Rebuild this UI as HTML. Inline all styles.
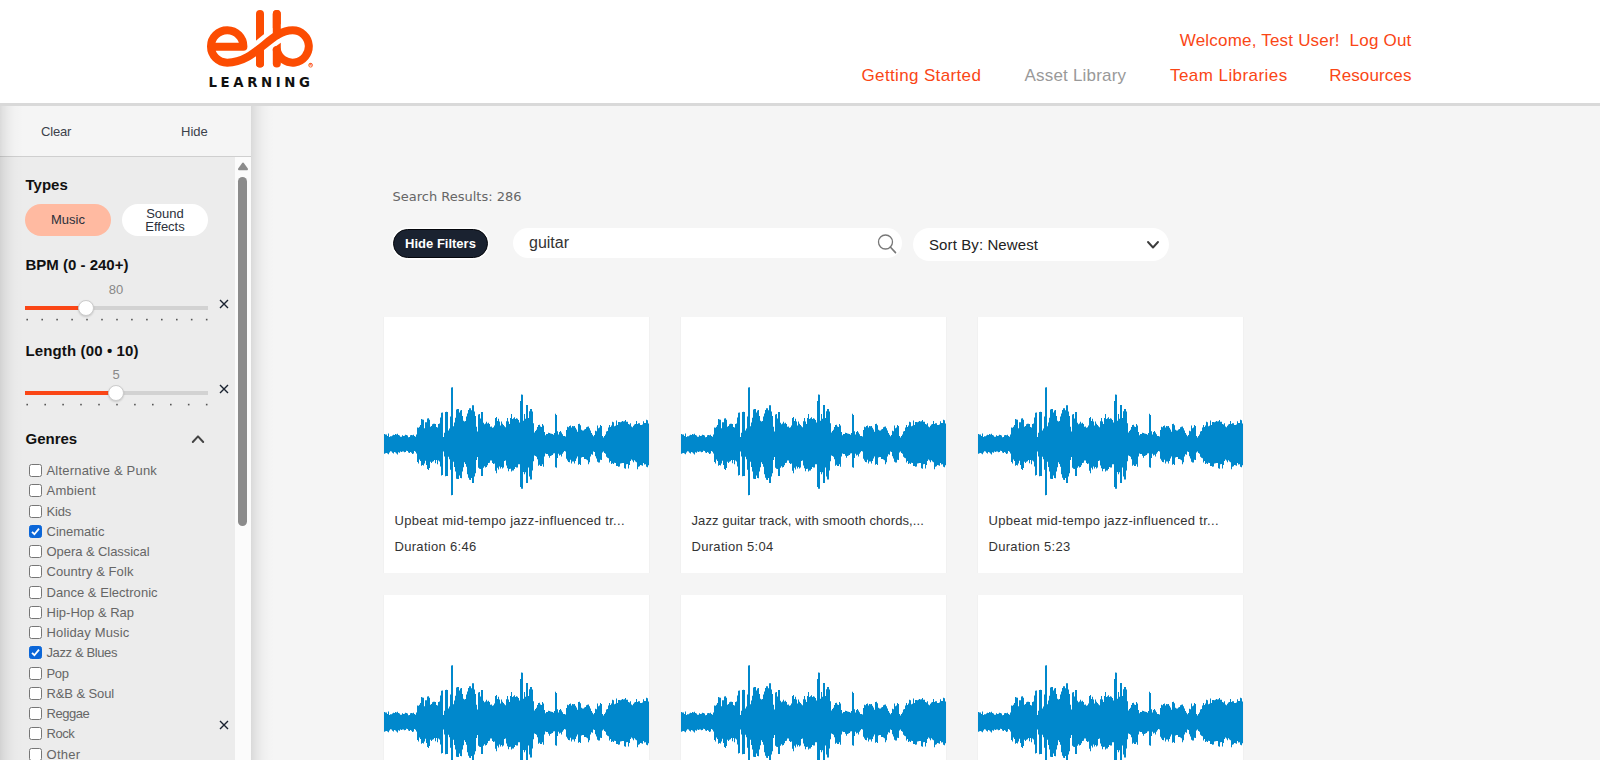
<!DOCTYPE html><html lang="en"><head><meta charset="utf-8"><title>Asset Library</title><style>
*{box-sizing:border-box;margin:0;padding:0}
html,body{width:1600px;height:760px;overflow:hidden;background:#f5f5f5;font-family:"Liberation Sans","DejaVu Sans",sans-serif;color:#333}
.abs{position:absolute;white-space:nowrap}
header{position:absolute;left:0;top:0;width:1600px;height:106px;background:#fff;border-bottom:3px solid #d9d9d9}
.nav a{position:absolute;white-space:nowrap;font-size:17px;line-height:20px;color:#fa4616;text-decoration:none}
.nav a.cur{color:#999}
#side{position:absolute;left:0;top:106px;width:251px;height:654px;background:#f5f5f5;}
.shl,.shr{position:absolute;top:106px;width:22px;height:654px;pointer-events:none}
.shl{left:0;width:26px;background:linear-gradient(90deg,rgba(0,0,0,.11) 0,rgba(0,0,0,.08) 3px,rgba(0,0,0,.05) 7px,rgba(0,0,0,.028) 11px,rgba(0,0,0,.013) 15px,rgba(0,0,0,.005) 20px,rgba(0,0,0,0) 25px)}
.shr{left:251px;width:26px;background:linear-gradient(90deg,rgba(0,0,0,.115) 0,rgba(0,0,0,.085) 3px,rgba(0,0,0,.055) 7px,rgba(0,0,0,.03) 11px,rgba(0,0,0,.014) 15px,rgba(0,0,0,.005) 20px,rgba(0,0,0,0) 25px)}
#side .top{position:absolute;left:0;top:0;width:251px;height:51px;border-bottom:1px solid #cfcfcf;background:#f5f5f5}
#side .top span{position:absolute;font-size:13px;line-height:16px;color:#3c414b}
#scroll{position:absolute;left:0;top:51px;width:235px;height:603px;background:#ececec;overflow:hidden}
#sbar{position:absolute;left:235px;top:51px;width:16px;height:603px;background:#fbfbfb}
#sbar i{position:absolute;left:3.2px;top:19.5px;width:9px;height:349px;border-radius:5px;background:#8b8b8b}
h3{position:absolute;left:25.5px;font-size:15px;line-height:18px;font-weight:bold;color:#111;white-space:nowrap}
.pill{position:absolute;top:47px;width:86px;height:32px;border-radius:16px;font-size:13px;color:#2b303b;text-align:center}
.val{position:absolute;left:96px;width:40px;text-align:center;font-size:13px;line-height:16px;color:#888}
.track{position:absolute;left:25px;width:183px;height:4px;background:#d2d2d2}
.track u{position:absolute;left:0;top:0;height:4px;background:#fa4616;display:block}
.thumb{position:absolute;width:16px;height:16px;border-radius:50%;background:#fff;border:1px solid #ccc;box-shadow:0 1px 2px rgba(0,0,0,.15)}
.dots{position:absolute;left:0;top:0}
.x{position:absolute;left:219px;width:10px;height:10px}
.g{position:absolute;left:29px;height:20px;font-size:13px;line-height:20px;color:#666;white-space:nowrap}
.g i{position:absolute;left:0;top:3px;width:13px;height:13px;border:1px solid #767676;border-radius:2.5px;background:#fff}
.g i.on{background:#0b66d8;border-color:#0b66d8}
.g span{position:absolute;left:17.5px;top:0;letter-spacing:.15px}
#main{position:absolute;left:0;top:0}
.card{position:absolute;width:265px;height:256px;background:#fff;box-shadow:-1px 0 0 #f1f1f1,1px 0 0 #f1f1f1;overflow:hidden}
.card svg{position:absolute;left:0;top:47px}
.card p{position:absolute;left:10.5px;letter-spacing:.3px;font-size:13px;line-height:16px;color:#333;white-space:nowrap}
</style></head><body>
<div id="main">
<div class="abs" id="sr" style="left:392.5px;top:188.5px;font-family:'DejaVu Sans',sans-serif;font-size:13px;line-height:16px;color:#666">Search Results: 286</div>
<div class="abs" id="hf" style="left:393px;top:229px;width:95px;height:29px;border-radius:15px;background:#1a2230;border:1px solid #05070c;box-shadow:0 0 0 1.5px rgba(255,255,255,.85);color:#fff;font-weight:bold;font-size:13px;line-height:27px;text-align:center">Hide Filters</div>
<div class="abs" style="left:513px;top:228.3px;width:389px;height:30px;border-radius:15px;background:#fff"></div>
<div class="abs" id="gt" style="left:529px;top:234.3px;font-size:16px;line-height:18px;color:#333">guitar</div>
<svg class="abs" style="left:875px;top:232px" width="24" height="24" viewBox="0 0 24 24"><circle cx="10.5" cy="10" r="7" fill="none" stroke="#777" stroke-width="1.3"/><path d="M15.3 15 L20.5 20.6" stroke="#777" stroke-width="1.6" stroke-linecap="round"/></svg>
<div class="abs" style="left:913px;top:228px;width:256px;height:33px;border-radius:17px;background:#fff"></div>
<div class="abs" id="sb" style="left:929px;top:236px;letter-spacing:.1px;font-size:15px;line-height:18px;color:#222">Sort By: Newest</div>
<svg class="abs" style="left:1146px;top:239px" width="14" height="12" viewBox="0 0 14 12"><path d="M2 3 L7 8.5 L12 3" fill="none" stroke="#3c3c3c" stroke-width="1.9" stroke-linecap="round" stroke-linejoin="round"/></svg>
<div class="card" style="left:384px;top:317px"><svg width="265" height="160" viewBox="0 -80 265 160"><path fill="#0088cc" d="M0,0V-9.9H1V-9.4H2V-9.6H3V-8.1H4V-10.4H5V-6.9H6V-7.8H7V-7.8H8V-8.5H9V-9.2H10V-9H11V-10H12V-9.6H13V-10.2H14V-8.9H15V-8.4H16V-7.3H17V-7.3H18V-8.8H19V-7.9H20V-8.2H21V-9.2H22V-9.1H23V-8.5H24V-6.8H25V-7.1H26V-8.7H27V-9.1H28V-8.7H29V-9.2H30V-8.1H31V-7.3H32V-9.6H33V-16.4H34V-16.2H35V-17.3H36V-18.9H37V-25.1H38V-24.4H39V-24.3H40V-15.8H41V-21.8H42V-21.7H43V-25.6H44V-25.7H45V-24.3H46V-17.2H47V-17.9H48V-19.8H49V-20.2H50V-20.3H51V-20.1H52V-16.9H53V-16.5H54V-20.1H55V-20.5H56V-26.5H57V-31.2H58V-31.4H59V-7.1H60V-11.2H61V-31.9H62V-32.2H63V-32.1H64V-13.4H65V-15.6H66V-27.5H67V-56.6H68V-56.8H69V-17.8H70V-21.4H71V-26.2H72V-34.5H73V-35H74V-34.9H75V-31.4H76V-33.6H77V-33.9H78V-28.1H79V-23.3H80V-22.4H81V-23H82V-27.4H83V-30.6H84V-34.1H85V-35.8H86V-35.8H87V-33.8H88V-38.8H89V-38.8H90V-32.4H91V-27.9H92V-17.2H93V-12.6H94V-29.5H95V-29.9H96V-25.6H97V-32.1H98V-31.9H99V-21.2H100V-19.7H101V-20.6H102V-22.2H103V-20.6H104V-21.3H105V-19.9H106V-17.3H107V-17.4H108V-16.3H109V-16.7H110V-18.6H111V-26.1H112V-27H113V-22.9H114V-25.2H115V-22.5H116V-18.4H117V-22.4H118V-20.3H119V-19.1H120V-17.8H121V-16.8H122V-22.7H123V-26.1H124V-22.4H125V-20.1H126V-26H127V-29.9H128V-25.1H129V-25.8H130V-26.8H131V-25H132V-25.8H133V-25.2H134V-24H135V-21.5H136V-43H137V-49.6H138V-49.3H139V-23.2H140V-30.1H141V-25.3H142V-39H143V-39H144V-26.1H145V-32.8H146V-35.1H147V-35H148V-32.4H149V-20.8H150V-11.5H151V-13H152V-14.2H153V-16.9H154V-19.1H155V-19.3H156V-17.5H157V-16.9H158V-20H159V-18.4H160V-12.1H161V-8.8H162V-10H163V-9.9H164V-11.2H165V-10.9H166V-10.4H167V-10.3H168V-10.1H169V-9.3H170V-11.1H171V-30.3H172V-28.9H173V-12.7H174V-9.4H175V-11.9H176V-12.9H177V-11.4H178V-9.7H179V-7.9H180V-7.9H181V-7.5H182V-14.1H183V-17.2H184V-16.8H185V-18H186V-18.6H187V-16.4H188V-18.1H189V-17.7H190V-17.9H191V-16.2H192V-14.5H193V-12.3H194V-20H195V-20.2H196V-18.7H197V-14.2H198V-13.5H199V-13.6H200V-14.4H201V-14.9H202V-16.7H203V-17.3H204V-17.4H205V-15.7H206V-13.4H207V-10.9H208V-9.2H209V-7.8H210V-9.1H211V-13.2H212V-12.7H213V-18.6H214V-15.7H215V-16.5H216V-19H217V-17.9H218V-8.1H219V-6.6H220V-7.9H221V-9.6H222V-12.6H223V-13H224V-16.6H225V-19H226V-16.9H227V-18.4H228V-22.2H229V-21.8H230V-17.8H231V-18.3H232V-23.4H233V-19H234V-22.1H235V-22H236V-21.8H237V-22.2H238V-22.9H239V-22.6H240V-22.7H241V-24H242V-22.3H243V-22.2H244V-19.9H245V-19.4H246V-20.7H247V-17.4H248V-16.7H249V-18.3H250V-19.6H251V-20H252V-22.9H253V-20.1H254V-20.7H255V-20.7H256V-19.1H257V-19H258V-19.5H259V-22.8H260V-20.9H261V-21H262V-24.3H263V-23.8H264V-20.6H265V0V21.2H264V23.2H263V22.8H262V20.3H261V20.6H260V18.9H259V21.8H258V21.2H257V21.1H256V22.2H255V22.7H254V25.2H253V18.2H252V17.5H251V16.2H250V18.2H249V16.4H248V15.6H247V17.1H246V21.1H245V24.4H244V19.9H243V20.2H242V24.7H241V24.3H240V18.9H239V18.9H238V19.3H237V19.5H236V22.5H235V22.8H234V21.9H233V22H232V18.9H231V18.8H230V19.9H229V19.2H228V20H227V17.1H226V18.5H225V14.2H224V13.7H223V12.7H222V9.7H221V8.9H220V7.4H219V8.6H218V15.9H217V15.7H216V18.4H215V18.5H214V17.8H213V14.6H212V12.3H211V8H210V7.4H209V10.8H208V10.3H207V12.5H206V18.2H205V20.3H204V16.3H203V15.5H202V15.1H201V15.1H200V13.1H199V13.1H198V13.5H197V21H196V20H195V20.7H194V12.6H193V14.4H192V17.1H191V19.5H190V17.6H189V17.5H188V19.6H187V15.8H186V18.3H185V18H184V16.5H183V14.7H182V7.4H181V7H180V8.3H179V9.7H178V12.5H177V10.7H176V11.5H175V9.7H174V13.9H173V23.7H172V23.3H171V9.2H170V9.6H169V11H168V11.4H167V11.9H166V13.7H165V11.8H164V10.1H163V9.9H162V9.4H161V12.4H160V22.7H159V20.3H158V22.1H157V22H156V20.8H155V21.8H154V15.2H153V12.7H152V12.1H151V11.4H150V17.3H149V26.6H148V35.5H147V35.5H146V32.6H145V23.4H144V38.9H143V38.9H142V28.3H141V30.2H140V27.9H139V44.7H138V44.7H137V42.9H136V20.3H135V20.2H134V23.4H133V23.4H132V23H131V25.1H130V26.4H129V26.6H128V27.6H127V24.7H126V25.1H125V27.3H124V24.2H123V21.5H122V16.6H121V17H120V23.4H119V24.5H118V23H117V24.6H116V22.4H115V25.6H114V23.8H113V29.3H112V26.7H111V19.6H110V19.9H109V18.9H108V16.5H107V16.4H106V18.7H105V19.1H104V21.2H103V23.1H102V23.4H101V22.3H100V23.8H99V32H98V32.1H97V24.9H96V24.7H95V23.8H94V13H93V16.1H92V29.3H91V32.5H90V39.1H89V39.1H88V34H87V36H86V35.7H85V33.8H84V30.3H83V22.8H82V19.9H81V18.3H80V23.2H79V27.4H78V34.2H77V33.9H76V31.4H75V35H74V35.1H73V34.7H72V27.4H71V23.1H70V17.7H69V51.1H68V51.2H67V25.8H66V15.3H65V12.8H64V31.9H63V32H62V32.3H61V12.4H60V7.4H59V31.1H58V31.4H57V22.6H56V17.5H55V16.4H54V20.3H53V15.9H52V19.3H51V16H50V17.3H49V17.7H48V18.9H47V17.7H46V24.1H45V25.9H44V24.9H43V20.9H42V16.7H41V19.6H40V21.5H39V21.1H38V21.8H37V17H36V15.4H35V19.4H34V17.9H33V9.4H32V7.8H31V7H30V9.5H29V10.1H28V8.8H27V8.1H26V8.9H25V8.4H24V7.1H23V6.8H22V8H21V8.2H20V7.6H19V7.4H18V8.1H17V7.6H16V8.8H15V8.2H14V10.5H13V9.5H12V8.4H11V8H10V9.5H9V8.7H8V7.4H7V7.2H6V8.4H5V10.3H4V9.4H3V9.1H2V9.2H1V9.7H0Z"/></svg><p class="ct" style="top:196px;letter-spacing:.3px">Upbeat mid-tempo jazz-influenced tr...</p><p class="cd" style="top:222px">Duration 6:46</p></div>
<div class="card" style="left:681px;top:317px"><svg width="265" height="160" viewBox="0 -80 265 160"><path fill="#0088cc" d="M0,0V-9.9H1V-9.4H2V-9.6H3V-8.1H4V-10.4H5V-6.9H6V-7.8H7V-7.8H8V-8.5H9V-9.2H10V-9H11V-10H12V-9.6H13V-10.2H14V-8.9H15V-8.4H16V-7.3H17V-7.3H18V-8.8H19V-7.9H20V-8.2H21V-9.2H22V-9.1H23V-8.5H24V-6.8H25V-7.1H26V-8.7H27V-9.1H28V-8.7H29V-9.2H30V-8.1H31V-7.3H32V-9.6H33V-16.4H34V-16.2H35V-17.3H36V-18.9H37V-25.1H38V-24.4H39V-24.3H40V-15.8H41V-21.8H42V-21.7H43V-25.6H44V-25.7H45V-24.3H46V-17.2H47V-17.9H48V-19.8H49V-20.2H50V-20.3H51V-20.1H52V-16.9H53V-16.5H54V-20.1H55V-20.5H56V-26.5H57V-31.2H58V-31.4H59V-7.1H60V-11.2H61V-31.9H62V-32.2H63V-32.1H64V-13.4H65V-15.6H66V-27.5H67V-56.6H68V-56.8H69V-17.8H70V-21.4H71V-26.2H72V-34.5H73V-35H74V-34.9H75V-31.4H76V-33.6H77V-33.9H78V-28.1H79V-23.3H80V-22.4H81V-23H82V-27.4H83V-30.6H84V-34.1H85V-35.8H86V-35.8H87V-33.8H88V-38.8H89V-38.8H90V-32.4H91V-27.9H92V-17.2H93V-12.6H94V-29.5H95V-29.9H96V-25.6H97V-32.1H98V-31.9H99V-21.2H100V-19.7H101V-20.6H102V-22.2H103V-20.6H104V-21.3H105V-19.9H106V-17.3H107V-17.4H108V-16.3H109V-16.7H110V-18.6H111V-26.1H112V-27H113V-22.9H114V-25.2H115V-22.5H116V-18.4H117V-22.4H118V-20.3H119V-19.1H120V-17.8H121V-16.8H122V-22.7H123V-26.1H124V-22.4H125V-20.1H126V-26H127V-29.9H128V-25.1H129V-25.8H130V-26.8H131V-25H132V-25.8H133V-25.2H134V-24H135V-21.5H136V-43H137V-49.6H138V-49.3H139V-23.2H140V-30.1H141V-25.3H142V-39H143V-39H144V-26.1H145V-32.8H146V-35.1H147V-35H148V-32.4H149V-20.8H150V-11.5H151V-13H152V-14.2H153V-16.9H154V-19.1H155V-19.3H156V-17.5H157V-16.9H158V-20H159V-18.4H160V-12.1H161V-8.8H162V-10H163V-9.9H164V-11.2H165V-10.9H166V-10.4H167V-10.3H168V-10.1H169V-9.3H170V-11.1H171V-30.3H172V-28.9H173V-12.7H174V-9.4H175V-11.9H176V-12.9H177V-11.4H178V-9.7H179V-7.9H180V-7.9H181V-7.5H182V-14.1H183V-17.2H184V-16.8H185V-18H186V-18.6H187V-16.4H188V-18.1H189V-17.7H190V-17.9H191V-16.2H192V-14.5H193V-12.3H194V-20H195V-20.2H196V-18.7H197V-14.2H198V-13.5H199V-13.6H200V-14.4H201V-14.9H202V-16.7H203V-17.3H204V-17.4H205V-15.7H206V-13.4H207V-10.9H208V-9.2H209V-7.8H210V-9.1H211V-13.2H212V-12.7H213V-18.6H214V-15.7H215V-16.5H216V-19H217V-17.9H218V-8.1H219V-6.6H220V-7.9H221V-9.6H222V-12.6H223V-13H224V-16.6H225V-19H226V-16.9H227V-18.4H228V-22.2H229V-21.8H230V-17.8H231V-18.3H232V-23.4H233V-19H234V-22.1H235V-22H236V-21.8H237V-22.2H238V-22.9H239V-22.6H240V-22.7H241V-24H242V-22.3H243V-22.2H244V-19.9H245V-19.4H246V-20.7H247V-17.4H248V-16.7H249V-18.3H250V-19.6H251V-20H252V-22.9H253V-20.1H254V-20.7H255V-20.7H256V-19.1H257V-19H258V-19.5H259V-22.8H260V-20.9H261V-21H262V-24.3H263V-23.8H264V-20.6H265V0V21.2H264V23.2H263V22.8H262V20.3H261V20.6H260V18.9H259V21.8H258V21.2H257V21.1H256V22.2H255V22.7H254V25.2H253V18.2H252V17.5H251V16.2H250V18.2H249V16.4H248V15.6H247V17.1H246V21.1H245V24.4H244V19.9H243V20.2H242V24.7H241V24.3H240V18.9H239V18.9H238V19.3H237V19.5H236V22.5H235V22.8H234V21.9H233V22H232V18.9H231V18.8H230V19.9H229V19.2H228V20H227V17.1H226V18.5H225V14.2H224V13.7H223V12.7H222V9.7H221V8.9H220V7.4H219V8.6H218V15.9H217V15.7H216V18.4H215V18.5H214V17.8H213V14.6H212V12.3H211V8H210V7.4H209V10.8H208V10.3H207V12.5H206V18.2H205V20.3H204V16.3H203V15.5H202V15.1H201V15.1H200V13.1H199V13.1H198V13.5H197V21H196V20H195V20.7H194V12.6H193V14.4H192V17.1H191V19.5H190V17.6H189V17.5H188V19.6H187V15.8H186V18.3H185V18H184V16.5H183V14.7H182V7.4H181V7H180V8.3H179V9.7H178V12.5H177V10.7H176V11.5H175V9.7H174V13.9H173V23.7H172V23.3H171V9.2H170V9.6H169V11H168V11.4H167V11.9H166V13.7H165V11.8H164V10.1H163V9.9H162V9.4H161V12.4H160V22.7H159V20.3H158V22.1H157V22H156V20.8H155V21.8H154V15.2H153V12.7H152V12.1H151V11.4H150V17.3H149V26.6H148V35.5H147V35.5H146V32.6H145V23.4H144V38.9H143V38.9H142V28.3H141V30.2H140V27.9H139V44.7H138V44.7H137V42.9H136V20.3H135V20.2H134V23.4H133V23.4H132V23H131V25.1H130V26.4H129V26.6H128V27.6H127V24.7H126V25.1H125V27.3H124V24.2H123V21.5H122V16.6H121V17H120V23.4H119V24.5H118V23H117V24.6H116V22.4H115V25.6H114V23.8H113V29.3H112V26.7H111V19.6H110V19.9H109V18.9H108V16.5H107V16.4H106V18.7H105V19.1H104V21.2H103V23.1H102V23.4H101V22.3H100V23.8H99V32H98V32.1H97V24.9H96V24.7H95V23.8H94V13H93V16.1H92V29.3H91V32.5H90V39.1H89V39.1H88V34H87V36H86V35.7H85V33.8H84V30.3H83V22.8H82V19.9H81V18.3H80V23.2H79V27.4H78V34.2H77V33.9H76V31.4H75V35H74V35.1H73V34.7H72V27.4H71V23.1H70V17.7H69V51.1H68V51.2H67V25.8H66V15.3H65V12.8H64V31.9H63V32H62V32.3H61V12.4H60V7.4H59V31.1H58V31.4H57V22.6H56V17.5H55V16.4H54V20.3H53V15.9H52V19.3H51V16H50V17.3H49V17.7H48V18.9H47V17.7H46V24.1H45V25.9H44V24.9H43V20.9H42V16.7H41V19.6H40V21.5H39V21.1H38V21.8H37V17H36V15.4H35V19.4H34V17.9H33V9.4H32V7.8H31V7H30V9.5H29V10.1H28V8.8H27V8.1H26V8.9H25V8.4H24V7.1H23V6.8H22V8H21V8.2H20V7.6H19V7.4H18V8.1H17V7.6H16V8.8H15V8.2H14V10.5H13V9.5H12V8.4H11V8H10V9.5H9V8.7H8V7.4H7V7.2H6V8.4H5V10.3H4V9.4H3V9.1H2V9.2H1V9.7H0Z"/></svg><p class="ct" style="top:196px;letter-spacing:.1px">Jazz guitar track, with smooth chords,...</p><p class="cd" style="top:222px">Duration 5:04</p></div>
<div class="card" style="left:978px;top:317px"><svg width="265" height="160" viewBox="0 -80 265 160"><path fill="#0088cc" d="M0,0V-9.9H1V-9.4H2V-9.6H3V-8.1H4V-10.4H5V-6.9H6V-7.8H7V-7.8H8V-8.5H9V-9.2H10V-9H11V-10H12V-9.6H13V-10.2H14V-8.9H15V-8.4H16V-7.3H17V-7.3H18V-8.8H19V-7.9H20V-8.2H21V-9.2H22V-9.1H23V-8.5H24V-6.8H25V-7.1H26V-8.7H27V-9.1H28V-8.7H29V-9.2H30V-8.1H31V-7.3H32V-9.6H33V-16.4H34V-16.2H35V-17.3H36V-18.9H37V-25.1H38V-24.4H39V-24.3H40V-15.8H41V-21.8H42V-21.7H43V-25.6H44V-25.7H45V-24.3H46V-17.2H47V-17.9H48V-19.8H49V-20.2H50V-20.3H51V-20.1H52V-16.9H53V-16.5H54V-20.1H55V-20.5H56V-26.5H57V-31.2H58V-31.4H59V-7.1H60V-11.2H61V-31.9H62V-32.2H63V-32.1H64V-13.4H65V-15.6H66V-27.5H67V-56.6H68V-56.8H69V-17.8H70V-21.4H71V-26.2H72V-34.5H73V-35H74V-34.9H75V-31.4H76V-33.6H77V-33.9H78V-28.1H79V-23.3H80V-22.4H81V-23H82V-27.4H83V-30.6H84V-34.1H85V-35.8H86V-35.8H87V-33.8H88V-38.8H89V-38.8H90V-32.4H91V-27.9H92V-17.2H93V-12.6H94V-29.5H95V-29.9H96V-25.6H97V-32.1H98V-31.9H99V-21.2H100V-19.7H101V-20.6H102V-22.2H103V-20.6H104V-21.3H105V-19.9H106V-17.3H107V-17.4H108V-16.3H109V-16.7H110V-18.6H111V-26.1H112V-27H113V-22.9H114V-25.2H115V-22.5H116V-18.4H117V-22.4H118V-20.3H119V-19.1H120V-17.8H121V-16.8H122V-22.7H123V-26.1H124V-22.4H125V-20.1H126V-26H127V-29.9H128V-25.1H129V-25.8H130V-26.8H131V-25H132V-25.8H133V-25.2H134V-24H135V-21.5H136V-43H137V-49.6H138V-49.3H139V-23.2H140V-30.1H141V-25.3H142V-39H143V-39H144V-26.1H145V-32.8H146V-35.1H147V-35H148V-32.4H149V-20.8H150V-11.5H151V-13H152V-14.2H153V-16.9H154V-19.1H155V-19.3H156V-17.5H157V-16.9H158V-20H159V-18.4H160V-12.1H161V-8.8H162V-10H163V-9.9H164V-11.2H165V-10.9H166V-10.4H167V-10.3H168V-10.1H169V-9.3H170V-11.1H171V-30.3H172V-28.9H173V-12.7H174V-9.4H175V-11.9H176V-12.9H177V-11.4H178V-9.7H179V-7.9H180V-7.9H181V-7.5H182V-14.1H183V-17.2H184V-16.8H185V-18H186V-18.6H187V-16.4H188V-18.1H189V-17.7H190V-17.9H191V-16.2H192V-14.5H193V-12.3H194V-20H195V-20.2H196V-18.7H197V-14.2H198V-13.5H199V-13.6H200V-14.4H201V-14.9H202V-16.7H203V-17.3H204V-17.4H205V-15.7H206V-13.4H207V-10.9H208V-9.2H209V-7.8H210V-9.1H211V-13.2H212V-12.7H213V-18.6H214V-15.7H215V-16.5H216V-19H217V-17.9H218V-8.1H219V-6.6H220V-7.9H221V-9.6H222V-12.6H223V-13H224V-16.6H225V-19H226V-16.9H227V-18.4H228V-22.2H229V-21.8H230V-17.8H231V-18.3H232V-23.4H233V-19H234V-22.1H235V-22H236V-21.8H237V-22.2H238V-22.9H239V-22.6H240V-22.7H241V-24H242V-22.3H243V-22.2H244V-19.9H245V-19.4H246V-20.7H247V-17.4H248V-16.7H249V-18.3H250V-19.6H251V-20H252V-22.9H253V-20.1H254V-20.7H255V-20.7H256V-19.1H257V-19H258V-19.5H259V-22.8H260V-20.9H261V-21H262V-24.3H263V-23.8H264V-20.6H265V0V21.2H264V23.2H263V22.8H262V20.3H261V20.6H260V18.9H259V21.8H258V21.2H257V21.1H256V22.2H255V22.7H254V25.2H253V18.2H252V17.5H251V16.2H250V18.2H249V16.4H248V15.6H247V17.1H246V21.1H245V24.4H244V19.9H243V20.2H242V24.7H241V24.3H240V18.9H239V18.9H238V19.3H237V19.5H236V22.5H235V22.8H234V21.9H233V22H232V18.9H231V18.8H230V19.9H229V19.2H228V20H227V17.1H226V18.5H225V14.2H224V13.7H223V12.7H222V9.7H221V8.9H220V7.4H219V8.6H218V15.9H217V15.7H216V18.4H215V18.5H214V17.8H213V14.6H212V12.3H211V8H210V7.4H209V10.8H208V10.3H207V12.5H206V18.2H205V20.3H204V16.3H203V15.5H202V15.1H201V15.1H200V13.1H199V13.1H198V13.5H197V21H196V20H195V20.7H194V12.6H193V14.4H192V17.1H191V19.5H190V17.6H189V17.5H188V19.6H187V15.8H186V18.3H185V18H184V16.5H183V14.7H182V7.4H181V7H180V8.3H179V9.7H178V12.5H177V10.7H176V11.5H175V9.7H174V13.9H173V23.7H172V23.3H171V9.2H170V9.6H169V11H168V11.4H167V11.9H166V13.7H165V11.8H164V10.1H163V9.9H162V9.4H161V12.4H160V22.7H159V20.3H158V22.1H157V22H156V20.8H155V21.8H154V15.2H153V12.7H152V12.1H151V11.4H150V17.3H149V26.6H148V35.5H147V35.5H146V32.6H145V23.4H144V38.9H143V38.9H142V28.3H141V30.2H140V27.9H139V44.7H138V44.7H137V42.9H136V20.3H135V20.2H134V23.4H133V23.4H132V23H131V25.1H130V26.4H129V26.6H128V27.6H127V24.7H126V25.1H125V27.3H124V24.2H123V21.5H122V16.6H121V17H120V23.4H119V24.5H118V23H117V24.6H116V22.4H115V25.6H114V23.8H113V29.3H112V26.7H111V19.6H110V19.9H109V18.9H108V16.5H107V16.4H106V18.7H105V19.1H104V21.2H103V23.1H102V23.4H101V22.3H100V23.8H99V32H98V32.1H97V24.9H96V24.7H95V23.8H94V13H93V16.1H92V29.3H91V32.5H90V39.1H89V39.1H88V34H87V36H86V35.7H85V33.8H84V30.3H83V22.8H82V19.9H81V18.3H80V23.2H79V27.4H78V34.2H77V33.9H76V31.4H75V35H74V35.1H73V34.7H72V27.4H71V23.1H70V17.7H69V51.1H68V51.2H67V25.8H66V15.3H65V12.8H64V31.9H63V32H62V32.3H61V12.4H60V7.4H59V31.1H58V31.4H57V22.6H56V17.5H55V16.4H54V20.3H53V15.9H52V19.3H51V16H50V17.3H49V17.7H48V18.9H47V17.7H46V24.1H45V25.9H44V24.9H43V20.9H42V16.7H41V19.6H40V21.5H39V21.1H38V21.8H37V17H36V15.4H35V19.4H34V17.9H33V9.4H32V7.8H31V7H30V9.5H29V10.1H28V8.8H27V8.1H26V8.9H25V8.4H24V7.1H23V6.8H22V8H21V8.2H20V7.6H19V7.4H18V8.1H17V7.6H16V8.8H15V8.2H14V10.5H13V9.5H12V8.4H11V8H10V9.5H9V8.7H8V7.4H7V7.2H6V8.4H5V10.3H4V9.4H3V9.1H2V9.2H1V9.7H0Z"/></svg><p class="ct" style="top:196px;letter-spacing:.3px">Upbeat mid-tempo jazz-influenced tr...</p><p class="cd" style="top:222px">Duration 5:23</p></div>
<div class="card" style="left:384px;top:595px"><svg width="265" height="160" viewBox="0 -80 265 160"><path fill="#0088cc" d="M0,0V-9.9H1V-9.4H2V-9.6H3V-8.1H4V-10.4H5V-6.9H6V-7.8H7V-7.8H8V-8.5H9V-9.2H10V-9H11V-10H12V-9.6H13V-10.2H14V-8.9H15V-8.4H16V-7.3H17V-7.3H18V-8.8H19V-7.9H20V-8.2H21V-9.2H22V-9.1H23V-8.5H24V-6.8H25V-7.1H26V-8.7H27V-9.1H28V-8.7H29V-9.2H30V-8.1H31V-7.3H32V-9.6H33V-16.4H34V-16.2H35V-17.3H36V-18.9H37V-25.1H38V-24.4H39V-24.3H40V-15.8H41V-21.8H42V-21.7H43V-25.6H44V-25.7H45V-24.3H46V-17.2H47V-17.9H48V-19.8H49V-20.2H50V-20.3H51V-20.1H52V-16.9H53V-16.5H54V-20.1H55V-20.5H56V-26.5H57V-31.2H58V-31.4H59V-7.1H60V-11.2H61V-31.9H62V-32.2H63V-32.1H64V-13.4H65V-15.6H66V-27.5H67V-56.6H68V-56.8H69V-17.8H70V-21.4H71V-26.2H72V-34.5H73V-35H74V-34.9H75V-31.4H76V-33.6H77V-33.9H78V-28.1H79V-23.3H80V-22.4H81V-23H82V-27.4H83V-30.6H84V-34.1H85V-35.8H86V-35.8H87V-33.8H88V-38.8H89V-38.8H90V-32.4H91V-27.9H92V-17.2H93V-12.6H94V-29.5H95V-29.9H96V-25.6H97V-32.1H98V-31.9H99V-21.2H100V-19.7H101V-20.6H102V-22.2H103V-20.6H104V-21.3H105V-19.9H106V-17.3H107V-17.4H108V-16.3H109V-16.7H110V-18.6H111V-26.1H112V-27H113V-22.9H114V-25.2H115V-22.5H116V-18.4H117V-22.4H118V-20.3H119V-19.1H120V-17.8H121V-16.8H122V-22.7H123V-26.1H124V-22.4H125V-20.1H126V-26H127V-29.9H128V-25.1H129V-25.8H130V-26.8H131V-25H132V-25.8H133V-25.2H134V-24H135V-21.5H136V-43H137V-49.6H138V-49.3H139V-23.2H140V-30.1H141V-25.3H142V-39H143V-39H144V-26.1H145V-32.8H146V-35.1H147V-35H148V-32.4H149V-20.8H150V-11.5H151V-13H152V-14.2H153V-16.9H154V-19.1H155V-19.3H156V-17.5H157V-16.9H158V-20H159V-18.4H160V-12.1H161V-8.8H162V-10H163V-9.9H164V-11.2H165V-10.9H166V-10.4H167V-10.3H168V-10.1H169V-9.3H170V-11.1H171V-30.3H172V-28.9H173V-12.7H174V-9.4H175V-11.9H176V-12.9H177V-11.4H178V-9.7H179V-7.9H180V-7.9H181V-7.5H182V-14.1H183V-17.2H184V-16.8H185V-18H186V-18.6H187V-16.4H188V-18.1H189V-17.7H190V-17.9H191V-16.2H192V-14.5H193V-12.3H194V-20H195V-20.2H196V-18.7H197V-14.2H198V-13.5H199V-13.6H200V-14.4H201V-14.9H202V-16.7H203V-17.3H204V-17.4H205V-15.7H206V-13.4H207V-10.9H208V-9.2H209V-7.8H210V-9.1H211V-13.2H212V-12.7H213V-18.6H214V-15.7H215V-16.5H216V-19H217V-17.9H218V-8.1H219V-6.6H220V-7.9H221V-9.6H222V-12.6H223V-13H224V-16.6H225V-19H226V-16.9H227V-18.4H228V-22.2H229V-21.8H230V-17.8H231V-18.3H232V-23.4H233V-19H234V-22.1H235V-22H236V-21.8H237V-22.2H238V-22.9H239V-22.6H240V-22.7H241V-24H242V-22.3H243V-22.2H244V-19.9H245V-19.4H246V-20.7H247V-17.4H248V-16.7H249V-18.3H250V-19.6H251V-20H252V-22.9H253V-20.1H254V-20.7H255V-20.7H256V-19.1H257V-19H258V-19.5H259V-22.8H260V-20.9H261V-21H262V-24.3H263V-23.8H264V-20.6H265V0V21.2H264V23.2H263V22.8H262V20.3H261V20.6H260V18.9H259V21.8H258V21.2H257V21.1H256V22.2H255V22.7H254V25.2H253V18.2H252V17.5H251V16.2H250V18.2H249V16.4H248V15.6H247V17.1H246V21.1H245V24.4H244V19.9H243V20.2H242V24.7H241V24.3H240V18.9H239V18.9H238V19.3H237V19.5H236V22.5H235V22.8H234V21.9H233V22H232V18.9H231V18.8H230V19.9H229V19.2H228V20H227V17.1H226V18.5H225V14.2H224V13.7H223V12.7H222V9.7H221V8.9H220V7.4H219V8.6H218V15.9H217V15.7H216V18.4H215V18.5H214V17.8H213V14.6H212V12.3H211V8H210V7.4H209V10.8H208V10.3H207V12.5H206V18.2H205V20.3H204V16.3H203V15.5H202V15.1H201V15.1H200V13.1H199V13.1H198V13.5H197V21H196V20H195V20.7H194V12.6H193V14.4H192V17.1H191V19.5H190V17.6H189V17.5H188V19.6H187V15.8H186V18.3H185V18H184V16.5H183V14.7H182V7.4H181V7H180V8.3H179V9.7H178V12.5H177V10.7H176V11.5H175V9.7H174V13.9H173V23.7H172V23.3H171V9.2H170V9.6H169V11H168V11.4H167V11.9H166V13.7H165V11.8H164V10.1H163V9.9H162V9.4H161V12.4H160V22.7H159V20.3H158V22.1H157V22H156V20.8H155V21.8H154V15.2H153V12.7H152V12.1H151V11.4H150V17.3H149V26.6H148V35.5H147V35.5H146V32.6H145V23.4H144V38.9H143V38.9H142V28.3H141V30.2H140V27.9H139V44.7H138V44.7H137V42.9H136V20.3H135V20.2H134V23.4H133V23.4H132V23H131V25.1H130V26.4H129V26.6H128V27.6H127V24.7H126V25.1H125V27.3H124V24.2H123V21.5H122V16.6H121V17H120V23.4H119V24.5H118V23H117V24.6H116V22.4H115V25.6H114V23.8H113V29.3H112V26.7H111V19.6H110V19.9H109V18.9H108V16.5H107V16.4H106V18.7H105V19.1H104V21.2H103V23.1H102V23.4H101V22.3H100V23.8H99V32H98V32.1H97V24.9H96V24.7H95V23.8H94V13H93V16.1H92V29.3H91V32.5H90V39.1H89V39.1H88V34H87V36H86V35.7H85V33.8H84V30.3H83V22.8H82V19.9H81V18.3H80V23.2H79V27.4H78V34.2H77V33.9H76V31.4H75V35H74V35.1H73V34.7H72V27.4H71V23.1H70V17.7H69V51.1H68V51.2H67V25.8H66V15.3H65V12.8H64V31.9H63V32H62V32.3H61V12.4H60V7.4H59V31.1H58V31.4H57V22.6H56V17.5H55V16.4H54V20.3H53V15.9H52V19.3H51V16H50V17.3H49V17.7H48V18.9H47V17.7H46V24.1H45V25.9H44V24.9H43V20.9H42V16.7H41V19.6H40V21.5H39V21.1H38V21.8H37V17H36V15.4H35V19.4H34V17.9H33V9.4H32V7.8H31V7H30V9.5H29V10.1H28V8.8H27V8.1H26V8.9H25V8.4H24V7.1H23V6.8H22V8H21V8.2H20V7.6H19V7.4H18V8.1H17V7.6H16V8.8H15V8.2H14V10.5H13V9.5H12V8.4H11V8H10V9.5H9V8.7H8V7.4H7V7.2H6V8.4H5V10.3H4V9.4H3V9.1H2V9.2H1V9.7H0Z"/></svg><p class="ct" style="top:196px;letter-spacing:.3px">Mellow acoustic guitar with warm to...</p><p class="cd" style="top:222px">Duration 3:12</p></div>
<div class="card" style="left:681px;top:595px"><svg width="265" height="160" viewBox="0 -80 265 160"><path fill="#0088cc" d="M0,0V-9.9H1V-9.4H2V-9.6H3V-8.1H4V-10.4H5V-6.9H6V-7.8H7V-7.8H8V-8.5H9V-9.2H10V-9H11V-10H12V-9.6H13V-10.2H14V-8.9H15V-8.4H16V-7.3H17V-7.3H18V-8.8H19V-7.9H20V-8.2H21V-9.2H22V-9.1H23V-8.5H24V-6.8H25V-7.1H26V-8.7H27V-9.1H28V-8.7H29V-9.2H30V-8.1H31V-7.3H32V-9.6H33V-16.4H34V-16.2H35V-17.3H36V-18.9H37V-25.1H38V-24.4H39V-24.3H40V-15.8H41V-21.8H42V-21.7H43V-25.6H44V-25.7H45V-24.3H46V-17.2H47V-17.9H48V-19.8H49V-20.2H50V-20.3H51V-20.1H52V-16.9H53V-16.5H54V-20.1H55V-20.5H56V-26.5H57V-31.2H58V-31.4H59V-7.1H60V-11.2H61V-31.9H62V-32.2H63V-32.1H64V-13.4H65V-15.6H66V-27.5H67V-56.6H68V-56.8H69V-17.8H70V-21.4H71V-26.2H72V-34.5H73V-35H74V-34.9H75V-31.4H76V-33.6H77V-33.9H78V-28.1H79V-23.3H80V-22.4H81V-23H82V-27.4H83V-30.6H84V-34.1H85V-35.8H86V-35.8H87V-33.8H88V-38.8H89V-38.8H90V-32.4H91V-27.9H92V-17.2H93V-12.6H94V-29.5H95V-29.9H96V-25.6H97V-32.1H98V-31.9H99V-21.2H100V-19.7H101V-20.6H102V-22.2H103V-20.6H104V-21.3H105V-19.9H106V-17.3H107V-17.4H108V-16.3H109V-16.7H110V-18.6H111V-26.1H112V-27H113V-22.9H114V-25.2H115V-22.5H116V-18.4H117V-22.4H118V-20.3H119V-19.1H120V-17.8H121V-16.8H122V-22.7H123V-26.1H124V-22.4H125V-20.1H126V-26H127V-29.9H128V-25.1H129V-25.8H130V-26.8H131V-25H132V-25.8H133V-25.2H134V-24H135V-21.5H136V-43H137V-49.6H138V-49.3H139V-23.2H140V-30.1H141V-25.3H142V-39H143V-39H144V-26.1H145V-32.8H146V-35.1H147V-35H148V-32.4H149V-20.8H150V-11.5H151V-13H152V-14.2H153V-16.9H154V-19.1H155V-19.3H156V-17.5H157V-16.9H158V-20H159V-18.4H160V-12.1H161V-8.8H162V-10H163V-9.9H164V-11.2H165V-10.9H166V-10.4H167V-10.3H168V-10.1H169V-9.3H170V-11.1H171V-30.3H172V-28.9H173V-12.7H174V-9.4H175V-11.9H176V-12.9H177V-11.4H178V-9.7H179V-7.9H180V-7.9H181V-7.5H182V-14.1H183V-17.2H184V-16.8H185V-18H186V-18.6H187V-16.4H188V-18.1H189V-17.7H190V-17.9H191V-16.2H192V-14.5H193V-12.3H194V-20H195V-20.2H196V-18.7H197V-14.2H198V-13.5H199V-13.6H200V-14.4H201V-14.9H202V-16.7H203V-17.3H204V-17.4H205V-15.7H206V-13.4H207V-10.9H208V-9.2H209V-7.8H210V-9.1H211V-13.2H212V-12.7H213V-18.6H214V-15.7H215V-16.5H216V-19H217V-17.9H218V-8.1H219V-6.6H220V-7.9H221V-9.6H222V-12.6H223V-13H224V-16.6H225V-19H226V-16.9H227V-18.4H228V-22.2H229V-21.8H230V-17.8H231V-18.3H232V-23.4H233V-19H234V-22.1H235V-22H236V-21.8H237V-22.2H238V-22.9H239V-22.6H240V-22.7H241V-24H242V-22.3H243V-22.2H244V-19.9H245V-19.4H246V-20.7H247V-17.4H248V-16.7H249V-18.3H250V-19.6H251V-20H252V-22.9H253V-20.1H254V-20.7H255V-20.7H256V-19.1H257V-19H258V-19.5H259V-22.8H260V-20.9H261V-21H262V-24.3H263V-23.8H264V-20.6H265V0V21.2H264V23.2H263V22.8H262V20.3H261V20.6H260V18.9H259V21.8H258V21.2H257V21.1H256V22.2H255V22.7H254V25.2H253V18.2H252V17.5H251V16.2H250V18.2H249V16.4H248V15.6H247V17.1H246V21.1H245V24.4H244V19.9H243V20.2H242V24.7H241V24.3H240V18.9H239V18.9H238V19.3H237V19.5H236V22.5H235V22.8H234V21.9H233V22H232V18.9H231V18.8H230V19.9H229V19.2H228V20H227V17.1H226V18.5H225V14.2H224V13.7H223V12.7H222V9.7H221V8.9H220V7.4H219V8.6H218V15.9H217V15.7H216V18.4H215V18.5H214V17.8H213V14.6H212V12.3H211V8H210V7.4H209V10.8H208V10.3H207V12.5H206V18.2H205V20.3H204V16.3H203V15.5H202V15.1H201V15.1H200V13.1H199V13.1H198V13.5H197V21H196V20H195V20.7H194V12.6H193V14.4H192V17.1H191V19.5H190V17.6H189V17.5H188V19.6H187V15.8H186V18.3H185V18H184V16.5H183V14.7H182V7.4H181V7H180V8.3H179V9.7H178V12.5H177V10.7H176V11.5H175V9.7H174V13.9H173V23.7H172V23.3H171V9.2H170V9.6H169V11H168V11.4H167V11.9H166V13.7H165V11.8H164V10.1H163V9.9H162V9.4H161V12.4H160V22.7H159V20.3H158V22.1H157V22H156V20.8H155V21.8H154V15.2H153V12.7H152V12.1H151V11.4H150V17.3H149V26.6H148V35.5H147V35.5H146V32.6H145V23.4H144V38.9H143V38.9H142V28.3H141V30.2H140V27.9H139V44.7H138V44.7H137V42.9H136V20.3H135V20.2H134V23.4H133V23.4H132V23H131V25.1H130V26.4H129V26.6H128V27.6H127V24.7H126V25.1H125V27.3H124V24.2H123V21.5H122V16.6H121V17H120V23.4H119V24.5H118V23H117V24.6H116V22.4H115V25.6H114V23.8H113V29.3H112V26.7H111V19.6H110V19.9H109V18.9H108V16.5H107V16.4H106V18.7H105V19.1H104V21.2H103V23.1H102V23.4H101V22.3H100V23.8H99V32H98V32.1H97V24.9H96V24.7H95V23.8H94V13H93V16.1H92V29.3H91V32.5H90V39.1H89V39.1H88V34H87V36H86V35.7H85V33.8H84V30.3H83V22.8H82V19.9H81V18.3H80V23.2H79V27.4H78V34.2H77V33.9H76V31.4H75V35H74V35.1H73V34.7H72V27.4H71V23.1H70V17.7H69V51.1H68V51.2H67V25.8H66V15.3H65V12.8H64V31.9H63V32H62V32.3H61V12.4H60V7.4H59V31.1H58V31.4H57V22.6H56V17.5H55V16.4H54V20.3H53V15.9H52V19.3H51V16H50V17.3H49V17.7H48V18.9H47V17.7H46V24.1H45V25.9H44V24.9H43V20.9H42V16.7H41V19.6H40V21.5H39V21.1H38V21.8H37V17H36V15.4H35V19.4H34V17.9H33V9.4H32V7.8H31V7H30V9.5H29V10.1H28V8.8H27V8.1H26V8.9H25V8.4H24V7.1H23V6.8H22V8H21V8.2H20V7.6H19V7.4H18V8.1H17V7.6H16V8.8H15V8.2H14V10.5H13V9.5H12V8.4H11V8H10V9.5H9V8.7H8V7.4H7V7.2H6V8.4H5V10.3H4V9.4H3V9.1H2V9.2H1V9.7H0Z"/></svg><p class="ct" style="top:196px;letter-spacing:.1px">Smooth jazz guitar over a laid-back...</p><p class="cd" style="top:222px">Duration 4:41</p></div>
<div class="card" style="left:978px;top:595px"><svg width="265" height="160" viewBox="0 -80 265 160"><path fill="#0088cc" d="M0,0V-9.9H1V-9.4H2V-9.6H3V-8.1H4V-10.4H5V-6.9H6V-7.8H7V-7.8H8V-8.5H9V-9.2H10V-9H11V-10H12V-9.6H13V-10.2H14V-8.9H15V-8.4H16V-7.3H17V-7.3H18V-8.8H19V-7.9H20V-8.2H21V-9.2H22V-9.1H23V-8.5H24V-6.8H25V-7.1H26V-8.7H27V-9.1H28V-8.7H29V-9.2H30V-8.1H31V-7.3H32V-9.6H33V-16.4H34V-16.2H35V-17.3H36V-18.9H37V-25.1H38V-24.4H39V-24.3H40V-15.8H41V-21.8H42V-21.7H43V-25.6H44V-25.7H45V-24.3H46V-17.2H47V-17.9H48V-19.8H49V-20.2H50V-20.3H51V-20.1H52V-16.9H53V-16.5H54V-20.1H55V-20.5H56V-26.5H57V-31.2H58V-31.4H59V-7.1H60V-11.2H61V-31.9H62V-32.2H63V-32.1H64V-13.4H65V-15.6H66V-27.5H67V-56.6H68V-56.8H69V-17.8H70V-21.4H71V-26.2H72V-34.5H73V-35H74V-34.9H75V-31.4H76V-33.6H77V-33.9H78V-28.1H79V-23.3H80V-22.4H81V-23H82V-27.4H83V-30.6H84V-34.1H85V-35.8H86V-35.8H87V-33.8H88V-38.8H89V-38.8H90V-32.4H91V-27.9H92V-17.2H93V-12.6H94V-29.5H95V-29.9H96V-25.6H97V-32.1H98V-31.9H99V-21.2H100V-19.7H101V-20.6H102V-22.2H103V-20.6H104V-21.3H105V-19.9H106V-17.3H107V-17.4H108V-16.3H109V-16.7H110V-18.6H111V-26.1H112V-27H113V-22.9H114V-25.2H115V-22.5H116V-18.4H117V-22.4H118V-20.3H119V-19.1H120V-17.8H121V-16.8H122V-22.7H123V-26.1H124V-22.4H125V-20.1H126V-26H127V-29.9H128V-25.1H129V-25.8H130V-26.8H131V-25H132V-25.8H133V-25.2H134V-24H135V-21.5H136V-43H137V-49.6H138V-49.3H139V-23.2H140V-30.1H141V-25.3H142V-39H143V-39H144V-26.1H145V-32.8H146V-35.1H147V-35H148V-32.4H149V-20.8H150V-11.5H151V-13H152V-14.2H153V-16.9H154V-19.1H155V-19.3H156V-17.5H157V-16.9H158V-20H159V-18.4H160V-12.1H161V-8.8H162V-10H163V-9.9H164V-11.2H165V-10.9H166V-10.4H167V-10.3H168V-10.1H169V-9.3H170V-11.1H171V-30.3H172V-28.9H173V-12.7H174V-9.4H175V-11.9H176V-12.9H177V-11.4H178V-9.7H179V-7.9H180V-7.9H181V-7.5H182V-14.1H183V-17.2H184V-16.8H185V-18H186V-18.6H187V-16.4H188V-18.1H189V-17.7H190V-17.9H191V-16.2H192V-14.5H193V-12.3H194V-20H195V-20.2H196V-18.7H197V-14.2H198V-13.5H199V-13.6H200V-14.4H201V-14.9H202V-16.7H203V-17.3H204V-17.4H205V-15.7H206V-13.4H207V-10.9H208V-9.2H209V-7.8H210V-9.1H211V-13.2H212V-12.7H213V-18.6H214V-15.7H215V-16.5H216V-19H217V-17.9H218V-8.1H219V-6.6H220V-7.9H221V-9.6H222V-12.6H223V-13H224V-16.6H225V-19H226V-16.9H227V-18.4H228V-22.2H229V-21.8H230V-17.8H231V-18.3H232V-23.4H233V-19H234V-22.1H235V-22H236V-21.8H237V-22.2H238V-22.9H239V-22.6H240V-22.7H241V-24H242V-22.3H243V-22.2H244V-19.9H245V-19.4H246V-20.7H247V-17.4H248V-16.7H249V-18.3H250V-19.6H251V-20H252V-22.9H253V-20.1H254V-20.7H255V-20.7H256V-19.1H257V-19H258V-19.5H259V-22.8H260V-20.9H261V-21H262V-24.3H263V-23.8H264V-20.6H265V0V21.2H264V23.2H263V22.8H262V20.3H261V20.6H260V18.9H259V21.8H258V21.2H257V21.1H256V22.2H255V22.7H254V25.2H253V18.2H252V17.5H251V16.2H250V18.2H249V16.4H248V15.6H247V17.1H246V21.1H245V24.4H244V19.9H243V20.2H242V24.7H241V24.3H240V18.9H239V18.9H238V19.3H237V19.5H236V22.5H235V22.8H234V21.9H233V22H232V18.9H231V18.8H230V19.9H229V19.2H228V20H227V17.1H226V18.5H225V14.2H224V13.7H223V12.7H222V9.7H221V8.9H220V7.4H219V8.6H218V15.9H217V15.7H216V18.4H215V18.5H214V17.8H213V14.6H212V12.3H211V8H210V7.4H209V10.8H208V10.3H207V12.5H206V18.2H205V20.3H204V16.3H203V15.5H202V15.1H201V15.1H200V13.1H199V13.1H198V13.5H197V21H196V20H195V20.7H194V12.6H193V14.4H192V17.1H191V19.5H190V17.6H189V17.5H188V19.6H187V15.8H186V18.3H185V18H184V16.5H183V14.7H182V7.4H181V7H180V8.3H179V9.7H178V12.5H177V10.7H176V11.5H175V9.7H174V13.9H173V23.7H172V23.3H171V9.2H170V9.6H169V11H168V11.4H167V11.9H166V13.7H165V11.8H164V10.1H163V9.9H162V9.4H161V12.4H160V22.7H159V20.3H158V22.1H157V22H156V20.8H155V21.8H154V15.2H153V12.7H152V12.1H151V11.4H150V17.3H149V26.6H148V35.5H147V35.5H146V32.6H145V23.4H144V38.9H143V38.9H142V28.3H141V30.2H140V27.9H139V44.7H138V44.7H137V42.9H136V20.3H135V20.2H134V23.4H133V23.4H132V23H131V25.1H130V26.4H129V26.6H128V27.6H127V24.7H126V25.1H125V27.3H124V24.2H123V21.5H122V16.6H121V17H120V23.4H119V24.5H118V23H117V24.6H116V22.4H115V25.6H114V23.8H113V29.3H112V26.7H111V19.6H110V19.9H109V18.9H108V16.5H107V16.4H106V18.7H105V19.1H104V21.2H103V23.1H102V23.4H101V22.3H100V23.8H99V32H98V32.1H97V24.9H96V24.7H95V23.8H94V13H93V16.1H92V29.3H91V32.5H90V39.1H89V39.1H88V34H87V36H86V35.7H85V33.8H84V30.3H83V22.8H82V19.9H81V18.3H80V23.2H79V27.4H78V34.2H77V33.9H76V31.4H75V35H74V35.1H73V34.7H72V27.4H71V23.1H70V17.7H69V51.1H68V51.2H67V25.8H66V15.3H65V12.8H64V31.9H63V32H62V32.3H61V12.4H60V7.4H59V31.1H58V31.4H57V22.6H56V17.5H55V16.4H54V20.3H53V15.9H52V19.3H51V16H50V17.3H49V17.7H48V18.9H47V17.7H46V24.1H45V25.9H44V24.9H43V20.9H42V16.7H41V19.6H40V21.5H39V21.1H38V21.8H37V17H36V15.4H35V19.4H34V17.9H33V9.4H32V7.8H31V7H30V9.5H29V10.1H28V8.8H27V8.1H26V8.9H25V8.4H24V7.1H23V6.8H22V8H21V8.2H20V7.6H19V7.4H18V8.1H17V7.6H16V8.8H15V8.2H14V10.5H13V9.5H12V8.4H11V8H10V9.5H9V8.7H8V7.4H7V7.2H6V8.4H5V10.3H4V9.4H3V9.1H2V9.2H1V9.7H0Z"/></svg><p class="ct" style="top:196px;letter-spacing:.3px">Bluesy electric guitar riffs with dr...</p><p class="cd" style="top:222px">Duration 2:58</p></div>
</div>
<div id="side"><div class="top"><span id="clr" style="left:41px;top:18px;letter-spacing:-.2px">Clear</span><span id="hid" style="left:181px;top:18px">Hide</span></div>
<div id="scroll">
<h3 id="h_types" style="top:19px">Types</h3>
<div class="pill" style="left:25px;background:#ffbaa1;line-height:32px"><span id="mus">Music</span></div>
<div class="pill" style="left:122px;background:#fff;line-height:13px;padding-top:3px"><span id="snd">Sound<br>Effects</span></div>
<h3 id="h_bpm" style="top:99px">BPM (0 - 240+)</h3>
<div class="val" style="top:124.5px">80</div>
<div class="track" style="top:149px"><u style="width:61px"></u></div><div class="thumb" style="left:78px;top:143px"></div>
<h3 id="h_len" style="top:185px;letter-spacing:.13px">Length (00 • 10)</h3>
<div class="val" style="top:210px">5</div>
<div class="track" style="top:234px"><u style="width:91px"></u></div><div class="thumb" style="left:108px;top:228px"></div>
<svg class="dots" width="235" height="603"><rect x="26.4" y="161.8" width="1.6" height="1.6" fill="#555"/><rect x="41.4" y="161.8" width="1.6" height="1.6" fill="#555"/><rect x="56.3" y="161.8" width="1.6" height="1.6" fill="#555"/><rect x="71.3" y="161.8" width="1.6" height="1.6" fill="#555"/><rect x="86.2" y="161.8" width="1.6" height="1.6" fill="#555"/><rect x="101.2" y="161.8" width="1.6" height="1.6" fill="#555"/><rect x="116.2" y="161.8" width="1.6" height="1.6" fill="#555"/><rect x="131.1" y="161.8" width="1.6" height="1.6" fill="#555"/><rect x="146.1" y="161.8" width="1.6" height="1.6" fill="#555"/><rect x="161.0" y="161.8" width="1.6" height="1.6" fill="#555"/><rect x="176.0" y="161.8" width="1.6" height="1.6" fill="#555"/><rect x="190.9" y="161.8" width="1.6" height="1.6" fill="#555"/><rect x="205.9" y="161.8" width="1.6" height="1.6" fill="#555"/><rect x="26.4" y="246.8" width="1.6" height="1.6" fill="#555"/><rect x="44.4" y="246.8" width="1.6" height="1.6" fill="#555"/><rect x="62.3" y="246.8" width="1.6" height="1.6" fill="#555"/><rect x="80.2" y="246.8" width="1.6" height="1.6" fill="#555"/><rect x="98.2" y="246.8" width="1.6" height="1.6" fill="#555"/><rect x="116.2" y="246.8" width="1.6" height="1.6" fill="#555"/><rect x="134.1" y="246.8" width="1.6" height="1.6" fill="#555"/><rect x="152.0" y="246.8" width="1.6" height="1.6" fill="#555"/><rect x="170.0" y="246.8" width="1.6" height="1.6" fill="#555"/><rect x="187.9" y="246.8" width="1.6" height="1.6" fill="#555"/><rect x="205.9" y="246.8" width="1.6" height="1.6" fill="#555"/></svg>
<svg class="x" style="top:142px" viewBox="0 0 10 10"><path d="M1 1 L9 9 M9 1 L1 9" stroke="#1a2230" stroke-width="1.4" fill="none"/></svg>
<svg class="x" style="top:227px" viewBox="0 0 10 10"><path d="M1 1 L9 9 M9 1 L1 9" stroke="#1a2230" stroke-width="1.4" fill="none"/></svg>
<svg class="x" style="top:563px" viewBox="0 0 10 10"><path d="M1 1 L9 9 M9 1 L1 9" stroke="#1a2230" stroke-width="1.4" fill="none"/></svg>
<h3 id="h_gen" style="top:273px">Genres</h3>
<svg class="abs" style="left:189.5px;top:275.5px" width="16" height="12" viewBox="0 0 16 12"><path d="M2.8 9 L8 3.4 L13.2 9" fill="none" stroke="#444" stroke-width="2" stroke-linecap="round" stroke-linejoin="round"/></svg>
<div class="g" style="top:304.00px"><i class=""></i><span class="gl" style="letter-spacing:0.20px">Alternative & Punk</span></div>
<div class="g" style="top:324.26px"><i class=""></i><span class="gl" style="letter-spacing:0.25px">Ambient</span></div>
<div class="g" style="top:344.52px"><i class=""></i><span class="gl" style="letter-spacing:-0.18px">Kids</span></div>
<div class="g" style="top:364.78px"><i class="on"><svg width="11" height="11" viewBox="0 0 11 11" style="position:absolute;left:0;top:0"><path d="M2 5.8 L4.4 8.2 L9 2.6" fill="none" stroke="#fff" stroke-width="1.8"/></svg></i><span class="gl" style="letter-spacing:0.01px">Cinematic</span></div>
<div class="g" style="top:385.04px"><i class=""></i><span class="gl" style="letter-spacing:-0.06px">Opera & Classical</span></div>
<div class="g" style="top:405.30px"><i class=""></i><span class="gl" style="letter-spacing:0.07px">Country & Folk</span></div>
<div class="g" style="top:425.56px"><i class=""></i><span class="gl" style="letter-spacing:0.03px">Dance & Electronic</span></div>
<div class="g" style="top:445.82px"><i class=""></i><span class="gl" style="letter-spacing:0.01px">Hip-Hop & Rap</span></div>
<div class="g" style="top:466.08px"><i class=""></i><span class="gl" style="letter-spacing:0.15px">Holiday Music</span></div>
<div class="g" style="top:486.34px"><i class="on"><svg width="11" height="11" viewBox="0 0 11 11" style="position:absolute;left:0;top:0"><path d="M2 5.8 L4.4 8.2 L9 2.6" fill="none" stroke="#fff" stroke-width="1.8"/></svg></i><span class="gl" style="letter-spacing:-0.38px">Jazz & Blues</span></div>
<div class="g" style="top:506.60px"><i class=""></i><span class="gl" style="letter-spacing:-0.30px">Pop</span></div>
<div class="g" style="top:526.86px"><i class=""></i><span class="gl" style="letter-spacing:-0.11px">R&B & Soul</span></div>
<div class="g" style="top:547.12px"><i class=""></i><span class="gl" style="letter-spacing:-0.45px">Reggae</span></div>
<div class="g" style="top:567.38px"><i class=""></i><span class="gl" style="letter-spacing:-0.45px">Rock</span></div>
<div class="g" style="top:587.64px"><i class=""></i><span class="gl" style="letter-spacing:0.28px">Other</span></div>
</div><div id="sbar"><svg style="position:absolute;left:0;top:0" width="16" height="20" viewBox="0 0 16 20"><path d="M8 6.6 L12 12.2 H4 Z" fill="#8b8b8b" stroke="#8b8b8b" stroke-width="2" stroke-linejoin="round"/></svg><i></i></div></div><div class="shl"></div><div class="shr"></div>
<header>
<svg class="abs" style="left:200px;top:0" width="130" height="100" viewBox="200 0 130 100">
<g fill="none" stroke="#fc4c02" stroke-width="8" stroke-linecap="round">
<path d="M260 14.1 V63.6"/><path d="M276.8 14.1 V63.6"/>
<path d="M227.2 62.65 C256 62.65 270 30.25 292.6 30.25" stroke="#fff" stroke-width="17" stroke-linecap="butt"/>
<path d="M211.5 46.7 H243.4 A16.2 16.2 0 1 0 227.2 62.65 C256 62.65 270 30.25 292.6 30.25 A16.2 16.2 0 1 1 276.8 50" stroke-linejoin="round"/>
<path d="M260 49 V63.6"/><path d="M276.8 14.1 V35"/>
</g>
<circle cx="310.6" cy="65.2" r="1.9" fill="none" stroke="#fc4c02" stroke-width="0.8"/><text x="309.4" y="66.4" font-family="Liberation Sans, sans-serif" font-size="3.4" font-weight="bold" fill="#fc4c02">R</text>
<text id="learn" x="208.5" y="87.2" font-family="DejaVu Sans, Liberation Sans, sans-serif" font-weight="bold" font-size="13.3" letter-spacing="3.6" fill="#111">LEARNING</text>
</svg>
<div class="nav"><a id="n0" style="right:188.5px;top:31px;letter-spacing:.2px">Welcome, Test User!&nbsp; Log Out</a><a id="n1" style="left:861.5px;top:66px;letter-spacing:.36px">Getting Started</a><a id="n2" class="cur" style="left:1024.5px;top:66px;letter-spacing:.2px">Asset Library</a><a id="n3" style="left:1170px;top:66px;letter-spacing:.44px">Team Libraries</a><a id="n4" style="right:188.5px;top:66px;letter-spacing:.1px">Resources</a></div>
</header>
</body></html>
